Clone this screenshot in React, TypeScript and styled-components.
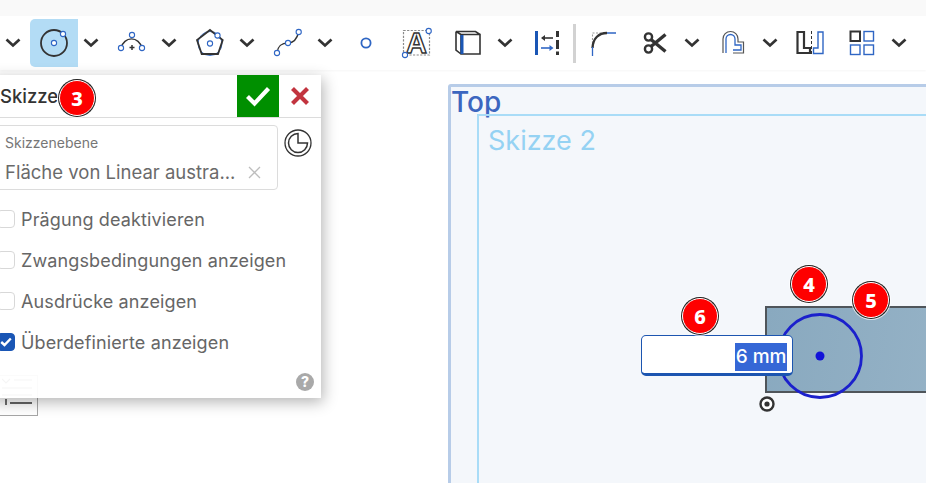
import React from "react";
import styled, { createGlobalStyle } from "styled-components";

const GlobalStyle = createGlobalStyle`
  html, body {
    margin: 0;
    padding: 0;
    background: #fff;
    font-family: "Inter", "Noto Sans", "Liberation Sans", sans-serif;
  }
`;

const Page = styled.div`
  width: 926px;
  height: 483px;
  display: flex;
  flex-direction: column;
  overflow: hidden;
`;

const TopStrip = styled.div`
  height: 16px;
  background: #f9f9f9;
`;

const Toolbar = styled.div`
  height: 54px;
  display: flex;
  align-items: center;
  background: #fff;
  box-shadow: 0 1px 2px rgba(0, 0, 0, 0.04);
  position: relative;
  z-index: 1;
`;

const ToolButton = styled.div<{ $active?: boolean; $width?: number }>`
  width: ${(p) => p.$width ?? 48}px;
  height: 48px;
  margin-left: 4px;
  display: flex;
  align-items: center;
  justify-content: center;
  border-radius: 5px 0 0 5px;
  background: ${(p) => (p.$active ? "#b3dcf5" : "transparent")};
`;

const ChevronCell = styled.div`
  width: 26px;
  display: flex;
  justify-content: center;
`;

const Divider = styled.div`
  width: 3px;
  height: 39px;
  margin: 0 -1px 0 2.5px;
  background: #d2d2d2;
`;

const Workspace = styled.div`
  flex: 1;
  position: relative;
`;

const Plane = styled.div`
  position: absolute;
  left: 448px;
  top: 14px;
  width: 500px;
  height: 420px;
  box-sizing: border-box;
  border: 3px solid #b7cce8;
  border-radius: 3px;
  background: #f4f7fb;
`;

const PlaneLabel = styled.div`
  position: absolute;
  left: 0;
  top: -1px;
  font-size: 28px;
  line-height: 32px;
  font-weight: 500;
  color: #3c66bf;
`;

const SketchFrame = styled.div`
  position: absolute;
  left: 26px;
  top: 27px;
  width: 480px;
  height: 400px;
  border: 2px solid #a9dcf7;
`;

const SketchLabel = styled.div`
  position: absolute;
  left: 9px;
  top: 9px;
  font-size: 27px;
  line-height: 32px;
  color: #95d2f3;
`;

const SketchRect = styled.div`
  position: absolute;
  left: 765px;
  top: 236px;
  width: 180px;
  height: 87px;
  box-sizing: border-box;
  border: 2px solid #4f555a;
  background: linear-gradient(100deg, #89a9bf, #95b2c6);
`;

const Drawing = styled.svg`
  position: absolute;
  overflow: visible;
`;

const DimensionInput = styled.div`
  position: absolute;
  left: 641px;
  top: 265px;
  width: 152px;
  height: 41px;
  box-sizing: border-box;
  display: flex;
  justify-content: flex-end;
  align-items: center;
  padding: 4px 5px 0 0;
  background: #fff;
  border: 1px solid #1c55b0;
  border-bottom: 3px solid #1c55b0;
  border-radius: 5px;
`;

const Selection = styled.span`
  background: #3567d6;
  color: #fff;
  font-size: 19px;
  line-height: 28px;
  font-weight: 500;
  padding: 0 0.5px;
`;

const Badge = styled.div<{ $x: number; $y: number }>`
  position: absolute;
  left: ${(p) => p.$x - 18}px;
  top: ${(p) => p.$y - 18}px;
  width: 36px;
  height: 36px;
  box-sizing: border-box;
  display: flex;
  align-items: center;
  justify-content: center;
  border-radius: 50%;
  background: #fe0000;
  border: 1px solid #fff;
  box-shadow: 0 0 0 1px #222, 0 0 0 2px rgba(255, 255, 255, 0.7);
  color: #fff;
  font-family: "Noto Sans", sans-serif;
  font-weight: 800;
  font-size: 20px;
  z-index: 3;
`;

const TreeToggle = styled.div`
  position: absolute;
  left: -10px;
  top: 305px;
  width: 48px;
  height: 41px;
  box-sizing: border-box;
  border: 1px solid #a6a6a6;
  display: flex;
  align-items: flex-end;
  justify-content: flex-end;
  padding: 0 5px 8px 0;
`;

const Panel = styled.div`
  position: absolute;
  left: -10px;
  top: 5px;
  width: 331px;
  height: 323px;
  display: flex;
  flex-direction: column;
  background: rgba(255, 255, 255, 0.95);
  box-shadow: 2px 4px 14px rgba(0, 0, 0, 0.3);
  z-index: 2;
`;

const PanelHeader = styled.div`
  height: 42px;
  display: flex;
  align-items: center;
  border-bottom: 1px solid #dcdcdc;
`;

const PanelTitle = styled.div`
  flex: 1;
  padding-left: 10px;
  font-size: 18.5px;
  font-weight: 500;
  color: #333;
`;

const HeaderButton = styled.div<{ $confirm?: boolean }>`
  width: 42px;
  height: 42px;
  display: flex;
  align-items: center;
  justify-content: center;
  background: ${(p) => (p.$confirm ? "#008f00" : "transparent")};
`;

const PlaneRow = styled.div`
  display: flex;
  align-items: flex-start;
  margin-top: 7px;
`;

const PlaneField = styled.div`
  width: 288px;
  height: 65px;
  box-sizing: border-box;
  padding: 8px 0 0 14px;
  border: 1px solid #dcdcdc;
  border-radius: 4px;
`;

const FieldLabel = styled.div`
  font-size: 14px;
  line-height: 17px;
  color: #767676;
`;

const FieldValue = styled.div`
  display: flex;
  align-items: center;
  justify-content: space-between;
  padding-right: 16px;
  margin-top: 8px;
  font-size: 18.5px;
  line-height: 26px;
  color: #6a6a6a;
`;

const ClockCell = styled.div`
  flex: 1;
  display: flex;
  justify-content: center;
  margin: 4px 3px 0 0;
`;

const Options = styled.div`
  display: flex;
  flex-direction: column;
  gap: 17px;
  margin-top: 17px;
  padding-left: 7px;
`;

const OptionRow = styled.label`
  display: flex;
  align-items: center;
  gap: 6px;
  height: 24px;
  font-size: 18px;
  letter-spacing: 0.13px;
  color: #666;
`;

const CheckBox = styled.span<{ $checked?: boolean }>`
  width: 18px;
  height: 18px;
  box-sizing: border-box;
  display: flex;
  align-items: center;
  justify-content: center;
  border-radius: 4px;
  border: 1px solid ${(p) => (p.$checked ? "#1a56b5" : "#d8d8d8")};
  background: ${(p) => (p.$checked ? "#1a56b5" : "#fff")};
`;

const HelpIcon = styled.div`
  position: absolute;
  right: 7px;
  bottom: 7px;
  width: 18px;
  height: 18px;
  border-radius: 50%;
  background: #a9a9a9;
  color: #fff;
  font-size: 14px;
  font-weight: 800;
  line-height: 18px;
  text-align: center;
`;

const DARK = "#333";
const BLUE = "#2f66c4";

const Chevron = () => (
  <ChevronCell>
    <svg width="16" height="10" viewBox="0 0 16 10">
      <path d="M1.5 1.5 8 7.5l6.5-6" fill="none" stroke={DARK} strokeWidth="2.7" />
    </svg>
  </ChevronCell>
);

const Handle = ({ x, y, r = 2.6 }: { x: number; y: number; r?: number }) => (
  <circle cx={x} cy={y} r={r} fill="#fff" stroke={BLUE} strokeWidth="1.1" />
);

const Icon = ({ children }: { children: React.ReactNode }) => (
  <svg width="32" height="32" viewBox="0 0 32 32" fill="none">
    {children}
  </svg>
);

const CircleIcon = () => (
  <Icon>
    <circle cx="16" cy="16" r="13" stroke={DARK} strokeWidth="1.8" />
    <Handle x={16} y={16} />
    <Handle x={25} y={7} />
  </Icon>
);

const ArcIcon = () => (
  <Icon>
    <path d="M5 21A11 13 0 0 1 26 21" stroke={DARK} strokeWidth="1.4" />
    <path d="M13.5 20.5h5M16 18v5" stroke={DARK} strokeWidth="1.5" />
    <Handle x={5} y={21} />
    <Handle x={16} y={8} />
    <Handle x={26} y={21} />
  </Icon>
);

const PolygonIcon = () => (
  <Icon>
    <circle cx="16" cy="16.5" r="12" stroke={BLUE} strokeWidth="0.9" />
    <path d="M16 3 28.7 13 24 27H7.7L3 13Z" stroke={DARK} strokeWidth="1.8" />
    <Handle x={16} y={16.5} />
    <Handle x={23.5} y={8.5} />
  </Icon>
);

const SplineIcon = () => (
  <Icon>
    <path d="M5 26C6 18 10 16 16 16 22 16 25 12 26.7 5" stroke={DARK} strokeWidth="1.4" />
    <Handle x={5} y={26} />
    <Handle x={16} y={16} />
    <Handle x={26.7} y={5} />
  </Icon>
);

const PointIcon = () => (
  <Icon>
    <circle cx="16" cy="16" r="4.6" stroke={BLUE} strokeWidth="1.8" />
  </Icon>
);

const TextIcon = () => (
  <Icon>
    <rect x="2.5" y="3.5" width="26" height="24.5" stroke="#8a8a8a" strokeWidth="1.2" strokeDasharray="2.2 1.4" />
    <text
      x="15.5"
      y="26"
      textAnchor="middle"
      fontFamily="Liberation Sans, sans-serif"
      fontWeight="700"
      fontSize="29"
      fill="#fff"
      stroke={DARK}
      strokeWidth="1.4"
    >
      A
    </text>
    <Handle x={27.7} y={4} />
    <Handle x={4} y={28} />
  </Icon>
);

const BoxIcon = () => (
  <Icon>
    <path d="M9 7.5h19V27H9ZM4 4.5h19.5L28 7.5M4 4.5V23l5 4M4 4.5l5 3" stroke={DARK} strokeWidth="1.6" />
    <path d="M10 8v19" stroke="#1a56b5" strokeWidth="3" />
  </Icon>
);

const MirrorIcon = () => (
  <Icon>
    <path d="M6.5 4v24" stroke="#1a56b5" strokeWidth="3" />
    <path d="M27.5 4v6M27.5 13v9M27.5 24.5v3.5" stroke={DARK} strokeWidth="3" />
    <path d="M23 11H12" stroke={DARK} strokeWidth="1.6" />
    <path d="M11 11l4-3v6Z" fill={DARK} />
    <path d="M11 21h11" stroke={BLUE} strokeWidth="1.6" />
    <path d="M23.5 21l-4-3v6Z" fill={BLUE} />
  </Icon>
);

const FilletIcon = () => (
  <Icon>
    <path d="M5.5 20V6H20" stroke="#9a9a9a" strokeWidth="1.1" strokeDasharray="2 1.5" />
    <path d="M5.5 21C6 11 12 6 20 6" stroke={DARK} strokeWidth="2.4" />
    <path d="M5.5 20v9M20 6h9" stroke={BLUE} strokeWidth="1.3" />
  </Icon>
);

const ScissorsIcon = () => (
  <Icon>
    <circle cx="9.5" cy="10" r="3.6" stroke={DARK} strokeWidth="2.4" />
    <circle cx="9.5" cy="22" r="3.6" stroke={DARK} strokeWidth="2.4" />
    <path d="M12 12.5 26.5 24.5M12 19.5 26.5 7.5" stroke={DARK} strokeWidth="3.4" />
  </Icon>
);

const OffsetIcon = () => (
  <Icon>
    <path d="M6 26V12A7.5 7.5 0 0 1 21 12V15H26.5V26H16" stroke="#555" strokeWidth="1.2" />
    <path d="M9 26V12A4.5 4.5 0 0 1 18 12V18H24V23H16" stroke={BLUE} strokeWidth="1.3" />
  </Icon>
);

const PatternIcon = () => (
  <Icon>
    <path d="M3.5 5H10V21H16V26H3.5Z" stroke={DARK} strokeWidth="2.2" />
    <path d="M17.5 4v24" stroke={DARK} strokeWidth="1" strokeDasharray="3 2" />
    <path d="M29 5H24V21H19.5V26.5H29Z" stroke={BLUE} strokeWidth="1.4" />
  </Icon>
);

const GridIcon = () => (
  <Icon>
    <rect x="4.5" y="4.5" width="9.5" height="9.5" stroke={DARK} strokeWidth="2" />
    <rect x="18" y="4.5" width="9.5" height="9.5" stroke={BLUE} strokeWidth="1.4" />
    <rect x="4.5" y="18" width="9.5" height="9.5" stroke={BLUE} strokeWidth="1.4" />
    <rect x="18" y="18" width="9.5" height="9.5" stroke={BLUE} strokeWidth="1.4" />
  </Icon>
);

const options = [
  { label: "Prägung deaktivieren", checked: false },
  { label: "Zwangsbedingungen anzeigen", checked: false },
  { label: "Ausdrücke anzeigen", checked: false },
  { label: "Überdefinierte anzeigen", checked: true },
];

const App: React.FC = () => {
  return (
    <Page>
      <GlobalStyle />
      <TopStrip />
      <Toolbar>
        <Chevron />
        <ToolButton $active><CircleIcon /></ToolButton>
        <Chevron />
        <ToolButton><ArcIcon /></ToolButton>
        <Chevron />
        <ToolButton><PolygonIcon /></ToolButton>
        <Chevron />
        <ToolButton><SplineIcon /></ToolButton>
        <Chevron />
        <ToolButton><PointIcon /></ToolButton>
        <ToolButton $width={46}><TextIcon /></ToolButton>
        <ToolButton><BoxIcon /></ToolButton>
        <Chevron />
        <ToolButton><MirrorIcon /></ToolButton>
        <Divider />
        <ToolButton><FilletIcon /></ToolButton>
        <ToolButton><ScissorsIcon /></ToolButton>
        <Chevron />
        <ToolButton><OffsetIcon /></ToolButton>
        <Chevron />
        <ToolButton $width={47}><PatternIcon /></ToolButton>
        <ToolButton><GridIcon /></ToolButton>
        <Chevron />
      </Toolbar>
      <Workspace>
        <Plane>
          <PlaneLabel>Top</PlaneLabel>
          <SketchFrame>
            <SketchLabel>Skizze 2</SketchLabel>
          </SketchFrame>
        </Plane>

        <SketchRect />
        <Drawing width="100" height="100" style={{ left: 769.5, top: 236 }} viewBox="0 0 100 100">
          <circle cx="50" cy="50" r="41.5" fill="none" stroke="#1b20cc" strokeWidth="2.8" />
          <circle cx="50" cy="50" r="4.5" fill="#1212d8" />
        </Drawing>
        <Drawing width="18" height="18" style={{ left: 758, top: 325 }} viewBox="0 0 18 18">
          <circle cx="9" cy="9" r="6.5" fill="#fff" stroke="#333" strokeWidth="2.4" />
          <circle cx="9" cy="9" r="2.6" fill="#333" />
        </Drawing>

        <DimensionInput>
          <Selection>6 mm</Selection>
        </DimensionInput>

        <Badge $x={77} $y={28}>3</Badge>
        <Badge $x={809} $y={214}>4</Badge>
        <Badge $x={871} $y={230}>5</Badge>
        <Badge $x={700} $y={246}>6</Badge>

        <TreeToggle>
          <svg width="30" height="30" viewBox="0 0 30 30" fill="none">
            <path d="M4 22v6M8 26h22" stroke="#333" strokeWidth="1.4" />
            <path d="M0 2l4 4 4-4M12 3h18M0 11h30M0 18h30" stroke="#444" strokeWidth="1.2" />
          </svg>
        </TreeToggle>

        <Panel>
          <PanelHeader>
            <PanelTitle>Skizze 1</PanelTitle>
            <HeaderButton $confirm>
              <svg width="26" height="22" viewBox="0 0 26 22" fill="none">
                <path d="M2.5 11.5 9.5 18.5 23.5 3.5" stroke="#fff" strokeWidth="4.2" />
              </svg>
            </HeaderButton>
            <HeaderButton>
              <svg width="20" height="20" viewBox="0 0 20 20" fill="none">
                <path d="M2.5 2.5l15 15M17.5 2.5l-15 15" stroke="#c2343f" strokeWidth="4.2" />
              </svg>
            </HeaderButton>
          </PanelHeader>
          <PlaneRow>
            <PlaneField>
              <FieldLabel>Skizzenebene</FieldLabel>
              <FieldValue>
                <span>Fläche von Linear austra...</span>
                <svg width="13" height="13" viewBox="0 0 13 13" fill="none">
                  <path d="M1 1l11 11M12 1 1 12" stroke="#bdbdbd" strokeWidth="1.3" />
                </svg>
              </FieldValue>
            </PlaneField>
            <ClockCell>
              <svg width="28" height="28" viewBox="0 0 28 28" fill="none">
                <circle cx="14" cy="14" r="13" stroke="#333" strokeWidth="1.3" />
                <path d="M14 4.5A9.5 9.5 0 1 0 23.5 14H14Z" stroke="#333" strokeWidth="1.5" />
              </svg>
            </ClockCell>
          </PlaneRow>
          <Options>
            {options.map((option) => (
              <OptionRow key={option.label}>
                <CheckBox $checked={option.checked}>
                  {option.checked && (
                    <svg width="12" height="10" viewBox="0 0 12 10" fill="none">
                      <path d="M1.2 5 4.5 8 10.8 1.5" stroke="#fff" strokeWidth="2.4" />
                    </svg>
                  )}
                </CheckBox>
                {option.label}
              </OptionRow>
            ))}
          </Options>
          <HelpIcon>?</HelpIcon>
        </Panel>
      </Workspace>
    </Page>
  );
};

export default App;
